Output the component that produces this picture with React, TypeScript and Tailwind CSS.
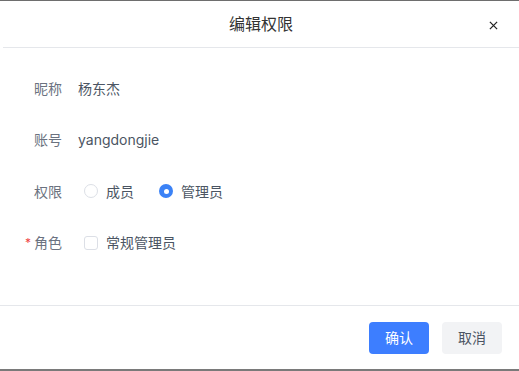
import { useState } from 'react'

// ── Form rows ────────────────────────────────────────────────────────────────

const FONT = '"Inter", "Noto Sans CJK SC", sans-serif'

function Row({ label, required, children }: { label: string; required?: boolean; children: React.ReactNode }) {
  return (
    <div className="flex items-center h-8">
      <div className="w-[62px] flex justify-end items-center text-[14px] text-[#6b7280]">
        {required && <span className="text-[#ef4444] mr-[3px] text-[12px] leading-none">*</span>}
        {label}
      </div>
      <div className="pl-4 flex items-center text-[14px] text-[#4b5563]">{children}</div>
    </div>
  )
}

export default function App() {
  const [role, setRole] = useState<'member' | 'admin'>('admin')
  const [regular, setRegular] = useState(false)

  return (
    <div
      className="w-[519px] h-[371px] bg-white flex flex-col border-t border-t-[#6e6e6e] border-b-2 border-b-[#7a7a7a]"
      style={{ fontFamily: FONT }}
    >
      {/* Header */}
      <div className="h-[47px] shrink-0 relative flex items-center justify-center border-b border-[#e5e7eb] ml-[3px]">
        <span className="text-[16px] text-[#333]">编辑权限</span>
        <button className="absolute right-[18px] top-[16px] w-4 h-4 flex items-center justify-center text-[#222]">
          <svg width="9" height="9" viewBox="0 0 10 10">
            <path d="M1 1L9 9M9 1L1 9" stroke="currentColor" strokeWidth="1.4" />
          </svg>
        </button>
      </div>

      {/* Body */}
      <div className="flex-1 flex flex-col gap-[19.5px] pt-[24px] border-b border-[#e5e7eb]">
        <Row label="昵称">杨东杰</Row>
        <Row label="账号">yangdongjie</Row>
        <Row label="权限">
          <label className="flex items-center gap-2 cursor-pointer pl-[6px]" onClick={() => setRole('member')}>
            <span
              className={
                role === 'member'
                  ? 'w-[14px] h-[14px] rounded-full bg-[#3b82f6] flex items-center justify-center'
                  : 'w-[14px] h-[14px] rounded-full border border-[#dcdfe6]'
              }
            >
              {role === 'member' && <span className="w-[5px] h-[5px] rounded-full bg-white" />}
            </span>
            <span>成员</span>
          </label>
          <label className="flex items-center gap-2 cursor-pointer ml-[25px]" onClick={() => setRole('admin')}>
            <span
              className={
                role === 'admin'
                  ? 'w-[14px] h-[14px] rounded-full bg-[#3b82f6] flex items-center justify-center'
                  : 'w-[14px] h-[14px] rounded-full border border-[#dcdfe6]'
              }
            >
              {role === 'admin' && <span className="w-[5px] h-[5px] rounded-full bg-white" />}
            </span>
            <span>管理员</span>
          </label>
        </Row>
        <Row label="角色" required>
          <label className="flex items-center gap-2 cursor-pointer pl-[6px]" onClick={() => setRegular(!regular)}>
            <span
              className={
                regular
                  ? 'w-[14px] h-[14px] rounded-[3px] bg-[#3b82f6]'
                  : 'w-[14px] h-[14px] rounded-[3px] border border-[#dcdfe6]'
              }
            />
            <span>常规管理员</span>
          </label>
        </Row>
      </div>

      {/* Footer */}
      <div className="h-[63px] shrink-0 flex items-center justify-end gap-[13px] pr-[17px]">
        <button className="w-[60px] h-8 rounded-[4px] bg-[#3d7eff] text-white text-[14px]">确认</button>
        <button className="w-[60px] h-8 rounded-[4px] bg-[#f2f3f5] text-[#4b5563] text-[14px]">取消</button>
      </div>
    </div>
  )
}
